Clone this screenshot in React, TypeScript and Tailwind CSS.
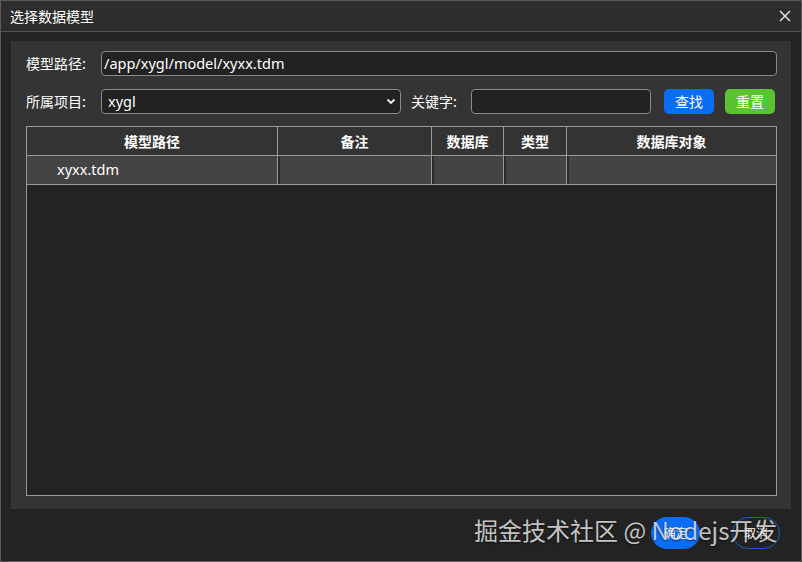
import React from 'react';

const cols = [
  { title: '模型路径', w: 'w-[251px]' },
  { title: '备注', w: 'w-[154px]' },
  { title: '数据库', w: 'w-[72px]' },
  { title: '类型', w: 'w-[63px]' },
  { title: '数据库对象', w: 'flex-1' },
];

const cjk = "font-['Noto_Sans_CJK_SC',sans-serif]";

const App: React.FC = () => {
  return (
    <div className="relative w-[802px] h-[562px] bg-[#232323] border border-[#5a5a5a] text-white font-['Noto_Sans','Noto_Sans_CJK_SC',sans-serif] overflow-hidden">
      {/* Title bar */}
      <div className="flex items-center justify-between h-[31px] px-[9px] bg-[#2d2d2d] border-b border-[#555]">
        <span className={`text-[14px] ${cjk}`}>选择数据模型</span>
        <svg width="12" height="12" viewBox="0 0 12 12" className="mr-[1px]">
          <path d="M1 1 L11 11 M11 1 L1 11" stroke="#ddd" strokeWidth="1.5" />
        </svg>
      </div>

      {/* Body */}
      <div className="px-[10px] pt-[9px]">
        <div className="bg-[#343434] h-[468px] pl-[15px] pr-[14px] pt-[10px] pb-[13px] flex flex-col">
          {/* Path */}
          <div className="flex items-center h-[25px]">
            <span className={`w-[75px] text-[14px] ${cjk}`}>模型路径:</span>
            <div className="flex-1 h-[25px] bg-[#222] border border-[#8a8a8a] rounded-[4px] flex items-center px-[2px] text-[14.5px]">
              /app/xygl/model/xyxx.tdm
            </div>
          </div>

          {/* Filter */}
          <div className="flex items-center h-[25px] mt-[13px]">
            <span className={`w-[75px] text-[14px] ${cjk}`}>所属项目:</span>
            <div className="w-[300px] h-[25px] bg-[#222] border border-[#8a8a8a] rounded-[4px] flex items-center justify-between pl-[6px] pr-[4px] text-[14.5px]">
              <span>xygl</span>
              <svg width="10" height="7" viewBox="0 0 10 7">
                <path d="M1.5 1.5 L5 5 L8.5 1.5" stroke="#eee" strokeWidth="1.8" fill="none" />
              </svg>
            </div>
            <span className={`ml-[10px] w-[60px] text-[14px] ${cjk}`}>关键字:</span>
            <div className="w-[180px] h-[25px] bg-[#222] border border-[#8a8a8a] rounded-[4px]" />
            <button className={`ml-[13px] w-[50px] h-[25px] rounded-[5px] bg-[#0b6cf5] text-[14px] ${cjk}`}>查找</button>
            <button className={`ml-[11px] w-[50px] h-[25px] rounded-[5px] bg-[#5bc331] text-[14px] ${cjk}`}>重置</button>
          </div>

          {/* Table */}
          <div className="mt-[12px] flex-1 border border-[#9a9a9a] bg-[#232323] flex flex-col">
            <div className="flex h-[29px] bg-[#333] border-b border-[#9a9a9a]">
              {cols.map((c, i) => (
                <div
                  key={c.title}
                  className={`${c.w} flex items-center justify-center text-[14px] font-bold ${cjk} ${i < cols.length - 1 ? 'border-r border-[#9a9a9a]' : ''}`}
                >
                  {c.title}
                </div>
              ))}
            </div>
            <div className="flex h-[29px] border-b border-[#9a9a9a] bg-[#2a2a2a]">
              {cols.map((c, i) => (
                <div key={c.title} className={`${c.w} ${i < cols.length - 1 ? 'border-r border-[#9a9a9a]' : ''} flex`}>
                  <div className={`flex-1 bg-[#444] flex items-center ${i > 0 ? 'ml-[2px]' : ''}`}>
                    {i === 0 && <span className="pl-[30px] text-[14.5px]">xyxx.tdm</span>}
                  </div>
                </div>
              ))}
            </div>
          </div>
        </div>

        {/* Footer */}
        <div className="flex justify-end items-center gap-[32px] pt-[8px] pr-[11px]">
          <button className={`w-[49px] h-[32px] rounded-full bg-[#0b6cf5] text-[12px] ${cjk}`}>确定</button>
          <button className={`w-[48px] h-[32px] rounded-full border border-[#1a5ec8] text-[12px] ${cjk}`}>取消</button>
        </div>
      </div>

      {/* Watermark */}
      <div className={`absolute left-[473px] top-[512px] text-[24px] leading-[34px] text-white/75 ${cjk} [text-shadow:0_1px_2px_rgba(0,0,0,0.6)] pointer-events-none whitespace-nowrap`}>
        掘金技术社区 @ Nodejs开发
      </div>
    </div>
  );
};

export default App;
